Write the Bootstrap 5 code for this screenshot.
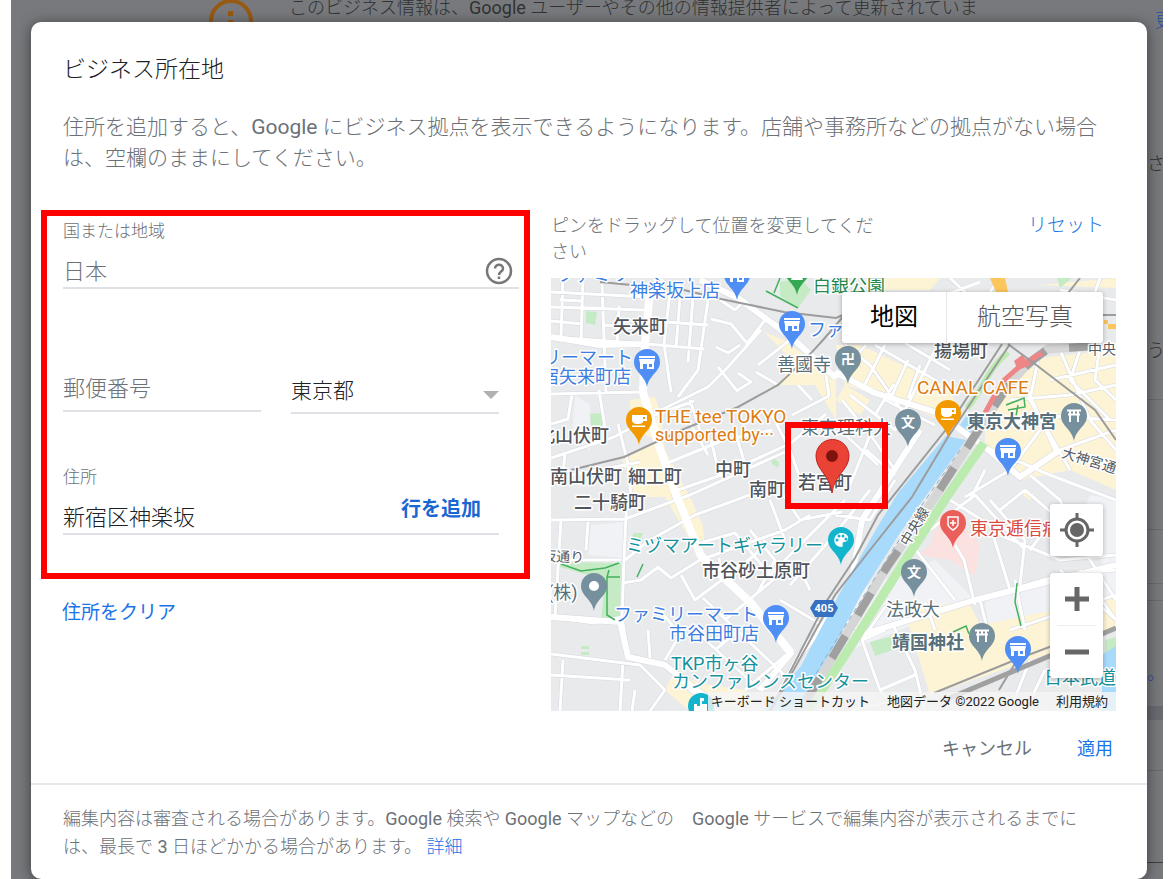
<!DOCTYPE html>
<html lang="ja">
<head>
<meta charset="utf-8">
<meta name="viewport" content="width=device-width, initial-scale=1">
<title>ビジネス所在地</title>
<link href="https://cdn.jsdelivr.net/npm/bootstrap@5.3.0/dist/css/bootstrap.min.css" rel="stylesheet">
<style>
body{font-family:Roboto,"Noto Sans CJK JP",sans-serif;font-weight:300;background:#fff;color:#202124}
.shell{margin:0 7px 0 11px;background:#77797c;min-height:100vh;overflow:hidden;padding:22px 16px 0 20px}
.backdrop-page{inset:0;color:#303133;font-size:18px;line-height:28px}
.notice-row{padding-left:198px;height:50px;gap:36px}
.notice-row p{margin-top:-6px}
.edge-col{right:0;top:0;bottom:0;width:16px;overflow:hidden;white-space:nowrap}
.edge-col div{border-bottom:1px solid #686a6d}
.edge-col .open{border:0}
.edge-link{color:#24509a}
.e-top{height:150px;padding:7px 0 0 8px}
.e-mid{height:187px}
.e-form{height:63px}
.e-wide{height:130px}
.e-thin{height:54px}
.e-line{height:17px}
.e-more{height:105px;padding-top:59px}
.e-band{height:14px;background:#696b70}
.e-gap{height:51px}
.e-last{height:92px;border-color:#3c3e40!important}
.sheet{background:#fff;border-radius:10px;box-shadow:0 2px 14px rgba(0,0,0,.5);color:#6c7177}
.sheet-head{padding:31px 32px 36px}
.sheet-head h1{font-size:23px;line-height:33px;font-weight:300;color:#202124;margin-bottom:26px}
.sheet-head p{font-size:21px;line-height:31px;margin:0}
.work{display:grid;grid-template-columns:489fr 565fr;gap:21px;padding:0 31px 0 10px}
.marked{border:6px solid #f00;padding:3px 5px 38px 16px}
.marked label{font-size:17px;line-height:24px;display:block;margin-bottom:8px}
.line-in{border:0;border-bottom:2px solid #dfe1e6;border-radius:0;background:transparent;padding:0;width:100%;font-size:22px;line-height:30px;color:#202124;font-weight:300;height:38px;display:block}
.line-in::placeholder{color:#6c7177;opacity:1}
.country{color:#6c7177}
.narrowed{margin-right:20px}
.pair{display:grid;grid-template-columns:198fr 208fr;gap:30px;margin-top:77px;margin-bottom:51px;align-items:start}
.pair .line-in{height:46px}
.pair .pref{appearance:none;font-size:21px;height:44px}
.drop{margin-top:4px}
.drop svg{right:0;bottom:15px}
.help{right:6px;top:6px}
.add-line{right:18px;top:0;font-size:20px;line-height:24px;color:#1967d2;font-weight:700}
.plain{border:0;background:none;padding:0}
.blue{color:#1a73e8}
.clear{font-size:19px;line-height:28px;margin:20px 0 0 21px}
.maphead{font-size:18px;line-height:26px;padding:3px 12px 13px 0}
.maphead p{max-width:335px;margin:0}
.maphead a,.note a{text-decoration:none}
.maphead a{font-size:19px}
.mapbox{overflow:hidden;background:#e9eaec}
.mapbox svg.streets{display:block;width:100%;height:auto}
.ctl{background:#fff;border-radius:3px;box-shadow:0 1px 5px rgba(0,0,0,.3);right:13px}
.types{top:14px;font-size:24px;line-height:51px}
.types button{color:#565656;padding:0 30px;font-weight:300}
.types button:first-child{color:#000;padding:0 28px;border-right:1px solid #e6e6e6;font-weight:400}
.locate{bottom:155px;width:53px;height:52px}
.zoomer{bottom:33px;width:53px;height:105px}
.zoomer button{height:52px;width:53px}
.zoomer hr{margin:0 7px;color:#bbb}
.credits{right:0;bottom:0;font-size:13px;line-height:19px;background:rgba(245,245,245,.8);color:#222;padding:0 8px 0 3px;gap:17px;font-weight:400}
.actions{padding:23px 34px 19px;gap:45px;font-size:18px;line-height:30px}
.actions button:last-child{color:#1a73e8}
.note{border-top:2px solid #e6e8ea;padding:20px 52px 18px 32px;font-size:18px;line-height:28px}
.note p{margin:0}
.casing{stroke:#d6d9df;fill:none;stroke-linejoin:round}
.road{stroke:#fff;fill:none;stroke-linejoin:round}
.rail{stroke:#9c9c9c;fill:none;stroke-width:2}
.lb{font-size:18px;fill:#555b61;stroke:#fff;stroke-width:3px;paint-order:stroke;stroke-linejoin:round;font-weight:400}
.town{font-weight:500;fill:#50555b}
.shop{fill:#3b7de0}.food{fill:#dc7c12;font-size:19px}.spot{fill:#15929c}.site{fill:#587079}
</style>
</head>
<body>
<div class="shell position-relative">
  <div class="backdrop-page position-absolute" aria-hidden="true">
    <div class="notice-row d-flex">
      <svg class="flex-shrink-0" width="44" height="44" viewBox="0 0 44 44"><circle cx="22" cy="21" r="20" fill="none" stroke="#985a12" stroke-width="4"/><path d="M19 11h5v5h-5zM19 20h5v13h-5z" fill="#985a12"/></svg>
      <p>このビジネス情報は、<span class="fw-normal">Google</span> ユーザーやその他の情報提供者によって更新されていま</p>
    </div>
    <div class="edge-col position-absolute">
      <div class="open edge-link e-top">更</div>
      <div class="open e-mid">さ</div>
      <div class="e-form">う</div>
      <div class="e-wide"></div>
      <div class="e-thin"></div>
      <div class="e-line"></div>
      <div class="open edge-link e-more">。</div>
      <div class="open e-band"></div>
      <div class="e-gap"></div>
      <div class="e-last"></div>
    </div>
  </div>

  <main class="sheet position-relative" role="dialog" aria-labelledby="ttl">
    <header class="sheet-head">
      <h1 id="ttl">ビジネス所在地</h1>
      <p>住所を追加すると、<span class="fw-normal">Google</span> にビジネス拠点を表示できるようになります。店舗や事務所などの拠点がない場合は、空欄のままにしてください。</p>
    </header>

    <div class="work">
      <form>
        <div class="marked">
          <label for="country">国または地域</label>
          <div class="position-relative">
            <input id="country" class="line-in country" value="日本" readonly>
            <button type="button" class="plain help position-absolute d-flex" aria-label="ヘルプ"><svg width="28" height="28" viewBox="0 0 28 28" fill="none" stroke="#777"><circle cx="14" cy="14" r="12" stroke-width="2.500"/><path d="M10 11.500C10 6.500 18 6.500 18 11.500C18 14.500 14 14.500 14 18" stroke-width="2.500"/><path d="M14 19.500v2.500" stroke-width="2.500"/></svg></button>
          </div>
          <div class="pair narrowed">
            <input class="line-in" placeholder="郵便番号" aria-label="郵便番号">
            <div class="drop position-relative">
              <select class="line-in pref" aria-label="都道府県"><option>東京都</option></select>
              <svg class="position-absolute pe-none" width="16" height="8" viewBox="0 0 16 8"><path d="M0 0h16l-8 8z" fill="#b0b0b0"/></svg>
            </div>
          </div>
          <div class="narrowed">
            <label for="addr">住所</label>
            <div class="position-relative">
              <input id="addr" class="line-in" value="新宿区神楽坂">
              <button type="button" class="plain add-line position-absolute">行を追加</button>
            </div>
          </div>
        </div>
        <button type="button" class="plain blue clear">住所をクリア</button>
      </form>

      <section>
        <div class="maphead d-flex justify-content-between align-items-start">
          <p>ピンをドラッグして位置を変更してください</p>
          <a href="#" class="blue">リセット</a>
        </div>
        <div class="mapbox position-relative">
          <svg class="streets" viewBox="551 278 565 433" role="img" aria-label="地図">
            <defs>
              <path id="pin" d="M0 25C-2 13-13 10-13 0A13 13 0 1 1 13 0C13 10 2 13 0 25z"/>
              <g id="store"><use href="#pin" fill="#4f8ff5"/><path d="M-8-6H8V-4H-8zM-8-3H8L7 1V7H0V2H-4V7H-7V1zM2 2V5H5V2z" fill="#fff" fill-rule="evenodd"/></g>
              <g id="cafe"><use href="#pin" fill="#f29900"/><path d="M-7-5H8V1H4V2Q3 4 0 4H-3Q-7 3-7 0zM4-3V-1H6V-3zM-7 5.500H6V7H-7z" fill="#fff"/></g>
              <g id="torii"><use href="#pin" fill="#77909d"/><path d="M-7-5.500H7M-6-1.500H6M-4-5V6M4-5V6M0-5v3" stroke="#fff" stroke-width="2" fill="none"/></g>
              <g id="school"><use href="#pin" fill="#77909d"/><text y="5" text-anchor="middle" font-size="14" font-weight="700" fill="#fff">文</text></g>
              <path id="minor" d="M563 278L561 337M583 278L581 340M602 284L606 392M619 306L617 344M551 292L648 297M551 307L644 310M551 321L583 324M551 337L648 344L704 349M560 300L583 301M604 325L648 329M671 284L664 344L671 392M680 297L676 348M693 297L688 362M708 300L698 370L678 397M666 322L708 325M711 319L731 324L746 342M720 300L735 310L745 300M716 347L728 353L740 345M761 330L728 367L708 387L661 410M718 367L738 392M738 373L751 382L738 390M757 312L765 320L746 345M756 372L778 385M758 365L790 340M551 394L641 392M572 394L568 419L551 424M599 390L606 434M551 458L614 437L655 415L694 401M618 424L628 464L631 497M565 452L563 475M551 479L640 462M665 464L724 440L772 430M678 490L724 474L791 443L826 414M711 440L720 477M736 434L746 468M772 415L790 450L800 478M688 420L708 455M690 400L700 430M826 375L829 396L792 415M798 385L812 400M551 520L625 519L690 495L785 452M561 520L555 617M588 522L586 550M627 495L624 560L622 617L628 657M551 560L621 560M551 617L594 623L622 617M622 583L641 580L658 567L671 578L700 560L785 530L810 515M625 560L650 540L695 515L785 482M700 543L735 533L770 575L845 500M681 575L695 600L755 555L765 540M703 598L800 690M719 558L722 578M725 620L785 570M750 530L775 560L758 592M770 500L785 540M783 495L800 520L842 512M648 630L650 658M628 657L665 665L690 690L720 711M665 660L680 635L660 610M551 654L640 665L665 690L650 711M563 660L560 711M623 662L620 711M635 690L632 711M551 675L630 680M700 635L760 690M745 690L786 655M715 650L745 625M790 585L830 540L870 490M810 590L800 570M780 600L822 625M835 515L870 520L895 480M845 345L870 365L905 415M850 395L895 430L935 350M862 390L885 345M875 345L935 380M885 400L935 425M905 343L950 370M860 420L895 470L920 430M866 450L895 475M842 400L870 435L850 485M888 480L915 440M894 384L875 415M908 360L890 400M920 365L908 398M840 430L878 465M836 378L866 345M932 300L980 282M950 278L965 292M1000 278L990 292M1060 290L1116 300M1100 278L1095 292M1040 350L1030 400L1070 470M1050 380L1116 365M1060 350L1090 420L1116 450M1080 350L1070 380L1110 420M1100 345L1095 380L1116 400M1025 385L1055 450M1010 400L1070 395L1116 385M1000 430L1035 415L1116 420M985 447L1050 475L1116 500M1022 475L1060 450L1116 430M1030 475L1060 500L1090 560L1116 600M965 497L1010 470L1040 430M950 500L990 525L1010 590M990 500L1025 540L1020 585M985 470L970 500M1000 510L1025 490L1060 520M955 545L964 560L975 605M930 530L975 495L1025 550M1000 535L1060 560L1116 555M1030 550L1060 510M904 535L955 600M860 635L893 625L975 600L1060 575L1116 570M885 607L862 640L880 690L895 711M893 625L915 670L925 711M862 640L885 630M880 690L915 675M980 600L990 640M925 602L935 630M1015 580L1025 630M1010 630L1116 595M1030 660L1010 711M1060 570L1116 620M835 615L863 632M850 711L895 700M1025 711L1045 670M1080 570L1116 620"/>
              <path id="mid" d="M551 337L600 345L648 344M700 280L738 298L791 337L836 378M835 372L875 393L935 412L985 447L1020 477L1060 450M674 493L701 556L751 603L791 653L760 690M551 617L620 622L628 657L665 665L710 700M860 635L975 600L1116 565M770 711L800 655L850 590L862 520L920 430"/>
              <path id="trunk" d="M660 278L649 300L645 345L643 392L658 443L677 497L701 556L751 603L791 653"/>
            </defs>
            <rect x="551" y="278" width="565" height="433" fill="#e9eaec"/>
            <g fill="#f0f2f5"><path d="M591 525L624 522L624 558L588 555zM830 600L935 560L975 600L850 650zM985 600L1116 570V600L990 640zM575 395L590 405L590 450L572 440zM1090 495L1116 500V590L1080 520z"/></g>
            <g fill="#fdf3d5"><path d="M764 332L784 340L836 378L836 420L815 385L780 385L792 360zM836 345L860 345L945 385L955 400L940 420L895 400L845 385zM845 385L870 400L860 415L836 400zM630 400L655 397L661 415L665 450L690 497L703 526L705 548L690 540L665 497L635 497L622 460L660 440L630 430zM985 420L1020 360L1116 350V490L1070 470L1020 480L985 447zM905 612L968 600L980 625L1116 598V630L1060 650L990 674L930 695zM673 674L705 684L745 690L755 705L690 711L665 690zM1040 285L1116 278V288zM870 278L940 278L930 290L880 290zM1020 493L1035 493L1030 500z"/></g>
            <path d="M930 545L940 515L965 528L980 545L975 575L950 560L920 555z" fill="#fbe1df"/>
            <g fill="#c5ebc5"><path d="M586 311L597 312L595 325L586 323zM590 414L602 413L602 427L591 426zM780 282L800 278L811 290L798 308L780 296zM559 562L621 563L620 618L601 620L605 580L560 567zM634 533L643 533L640 540L630 540zM771 457L779 462L778 468L772 464zM870 642L893 636L893 650L875 656zM1057 278L1072 278L1060 288zM1105 640L1116 637V711H1104zM581 646h8v3h-8zM581 652h8v3h-8z"/></g>
            <use href="#minor" class="casing" stroke-width="4"/><use href="#mid" class="casing" stroke-width="7"/>
            <use href="#minor" class="road" stroke-width="3"/><use href="#mid" class="road" stroke-width="6"/><use href="#trunk" class="road" stroke-width="8"/>
            <path d="M946 436L966 440L923 500L898 536L862 593L835 645L797 711H763L801 666L836 600L878 526L898 493z" fill="#a8dafc"/>
            <path d="M960 425L968 413L980 420L972 434zM1102 655L1116 646V711H1102z" fill="#a8dafc"/>
            <path d="M984 443L948 495L902 565L845 655L808 711" stroke="#bcebb0" stroke-width="9" fill="none"/>
            <path d="M1008 352C985 372 985 388 967 408" stroke="#bcebb0" stroke-width="6" fill="none"/>
            <path d="M1095 346L1048 349C1010 374 1000 400 985 420L935 497L885 570L835 653L800 711" fill="none" stroke="#d6d6d6" stroke-width="9"/>
            <path d="M1095 346L1048 349C1010 374 1000 400 985 420L935 497L885 570L835 653L800 711" fill="none" stroke="#a0a0a0" stroke-width="8" stroke-dasharray="26 24"/>
            <path d="M985 413L1002 382L1020 366L1042 353" stroke="#ee8587" stroke-width="5" fill="none"/>
            <path d="M1014 361L1022 355L1031 365L1018 370z" fill="#ee8587"/>
            <path class="rail" d="M600 282L684 290L721 299L784 312L836 318L845 314M850 308C820 345 808 357 778 385L738 407L684 429L624 457L571 470M1008 344L1035 364L1095 410L1116 440M1080 278L1058 306M1002 344L948 427L878 515L855 558L826 602L770 711M1010 344L948 437L912 497L870 550L835 595L781 693L770 711M934 693L1015 660L1060 643M1020 655L999 690M1103 315H1116"/>
            <path d="M945 700L1116 628" stroke="#a0a0a0" stroke-width="5"/>
            <path d="M960 450L913 518L875 578L824 660L795 711" fill="none" stroke="#8cadc2" stroke-dasharray="5 4"/>
            <path d="M990 278L1005 278L1008 292L996 292z" fill="#fbc65c"/><path d="M1104 320h4v4h-4zM1108 324h8v5h-8z" fill="#fbc65c"/>
            <path d="M766 291L798 308M780 278L774 293M561 564L581 571L605 568L619 563M609 570L607 577V615L615 620M607 577H620M637 577L643 564M1017 583L1015 602L1021 626M953 632L966 626L969 634M1006 405L1024 398L1025 407L1008 410M1018 405L1015 422" stroke="#43b05c" stroke-width="1.500" fill="none"/>
            <g class="lb shop"><text x="557" y="281">ファミリーマート</text><text x="630" y="297">神楽坂上店</text><text x="808" y="336">ファミ</text><text x="543" y="364">リーマート</text><text x="541" y="383">宿矢来町店</text><text x="614" y="621">ファミリーマート</text><text x="669" y="640">市谷田町店</text></g>
            <text class="lb" x="813" y="292" style="fill:#25884a">白銀公園</text>
            <g class="lb town"><text x="613" y="333">矢来町</text><text x="537" y="442">北山伏町</text><text x="550" y="483">南山伏町</text><text x="628" y="483">細工町</text><text x="574" y="509">二十騎町</text><text x="715" y="476">中町</text><text x="749" y="496">南町</text><text x="798" y="489">若宮町</text><text x="702" y="577">市谷砂土原町</text><text x="934" y="357">揚場町</text></g>
            <g class="lb site"><text x="777" y="371">善國寺</text><text x="801" y="434">東京理科大</text><text x="547" y="599">(株)</text><text x="886" y="616">法政大</text><g style="font-weight:700"><text x="967" y="428">東京大神宮</text><text x="892" y="649">靖国神社</text></g></g>
            <g class="lb food"><text x="655" y="423">THE tee TOKYO</text><text x="655" y="441" font-size="18">supported by···</text><text x="917" y="394">CANAL CAFE</text></g>
            <g class="lb spot"><text x="626" y="552">ミヅマアートギャラリー</text><text x="671" y="670">TKP市ヶ谷</text><text x="672" y="688">カンファレンスセンター</text><text x="1044" y="684">日本武道館</text></g>
            <text class="lb" x="970" y="535" style="fill:#d94b43">東京逓信病院</text>
            <g class="lb" style="font-size:14px"><text x="1088" y="354">中央線</text><text x="542" y="561" transform="rotate(2 542 561)">坂通り</text><text transform="translate(1061 457) rotate(17)">大神宮通り</text><text transform="translate(908 547) rotate(-59)">中央線</text></g>
            <use href="#store" x="737" y="275"/><use href="#store" x="792" y="324"/><use href="#store" x="647" y="362"/><use href="#store" x="1008" y="451"/><use href="#store" x="776" y="618"/><use href="#store" x="1018" y="649"/>
            <use href="#cafe" x="639" y="420"/><use href="#cafe" x="948" y="413"/><use href="#torii" x="1074" y="416"/><use href="#torii" x="982" y="636"/><use href="#school" x="908" y="422"/><use href="#school" x="914" y="572"/>
            <g transform="translate(797 270)"><use href="#pin" fill="#34a853"/><path d="M0-6L6 10H-6z" fill="#fff"/></g>
            <g transform="translate(848 359)"><use href="#pin" fill="#77909d"/><text y="5" text-anchor="middle" font-size="14" font-weight="700" fill="#fff">卍</text></g>
            <g transform="translate(594 586)"><use href="#pin" fill="#77909d"/><circle r="5" fill="#fff"/></g>
            <g transform="translate(841 540)"><use href="#pin" fill="#12b5cb"/><path d="M1 7C-9 7-9-6 0-7C9-7 9 2 3 2C0 2 3 6 1 7z" fill="#fff"/><g fill="#12b5cb"><circle cx="-4" cy="0" r="1.500"/><circle cx="-2" cy="-4" r="1.500"/><circle cx="2" cy="-4" r="1.500"/><circle cx="5" cy="-1" r="1.500"/></g></g>
            <g transform="translate(953 523)"><use href="#pin" fill="#ea5f59"/><path d="M-5-6H5V1Q5 4 0 7Q-5 4-5 1zM0-3V3M-3 0H3" fill="none" stroke="#fff" stroke-width="1.500"/></g>
            <g transform="translate(701 706)"><use href="#pin" fill="#12b5cb"/><path d="M-7-2h3v2h3v-8h4v3H1v3h5v8H-7z" fill="#fff"/></g>
            <path d="M815 600H833L838 608L833 617H815L810 608z" fill="#3771c2"/><text x="824" y="612" text-anchor="middle" font-size="11" font-weight="700" fill="#fff">405</text>
            <path d="M832 493C830 475 816 470 816 456A16 16 0 1 1 849 456C849 470 834 475 832 493z" fill="#ea4335" stroke="#c5221f"/><circle cx="832" cy="456" r="6" fill="#7f130e"/>
            <rect x="788" y="425" width="97" height="81" fill="none" stroke="#f00" stroke-width="6"/>
          </svg>
          <div class="ctl types position-absolute d-flex"><button type="button" class="plain">地図</button><button type="button" class="plain">航空写真</button></div>
          <button type="button" class="plain ctl locate position-absolute d-flex align-items-center justify-content-center bg-white" aria-label="現在地"><svg width="34" height="34" viewBox="0 0 34 34" fill="none" stroke="#666" stroke-width="3"><circle cx="17" cy="17" r="11"/><circle cx="17" cy="17" r="7" fill="#666" stroke="none"/><path d="M17 0v6M17 28v6M0 17h6M28 17h6"/></svg></button>
          <div class="ctl zoomer position-absolute">
            <button type="button" class="plain d-flex align-items-center justify-content-center" aria-label="拡大"><svg width="24" height="24" viewBox="0 0 24 24"><path d="M0 12h24M12 0v24" stroke="#666" stroke-width="5"/></svg></button><hr>
            <button type="button" class="plain d-flex align-items-center justify-content-center" aria-label="縮小"><svg width="24" height="24" viewBox="0 0 24 24"><path d="M0 12h24" stroke="#666" stroke-width="5"/></svg></button>
          </div>
          <div class="credits position-absolute d-flex"><span>キーボード ショートカット</span><span>地図データ ©2022 Google</span><span>利用規約</span></div>
        </div>
      </section>
    </div>

    <div class="actions d-flex justify-content-end"><button type="button" class="plain text-reset">キャンセル</button><button type="button" class="plain">適用</button></div>
    <footer class="note"><p>編集内容は審査される場合があります。<span class="fw-normal">Google</span> 検索や <span class="fw-normal">Google</span> マップなどの　<span class="fw-normal">Google</span> サービスで編集内容が表示されるまでには、最長で <span class="fw-normal">3</span> 日ほどかかる場合があります。 <a href="#" class="blue">詳細</a></p></footer>
  </main>
</div>
<script src="https://cdn.jsdelivr.net/npm/bootstrap@5.3.0/dist/js/bootstrap.bundle.min.js"></script>
</body>
</html>
